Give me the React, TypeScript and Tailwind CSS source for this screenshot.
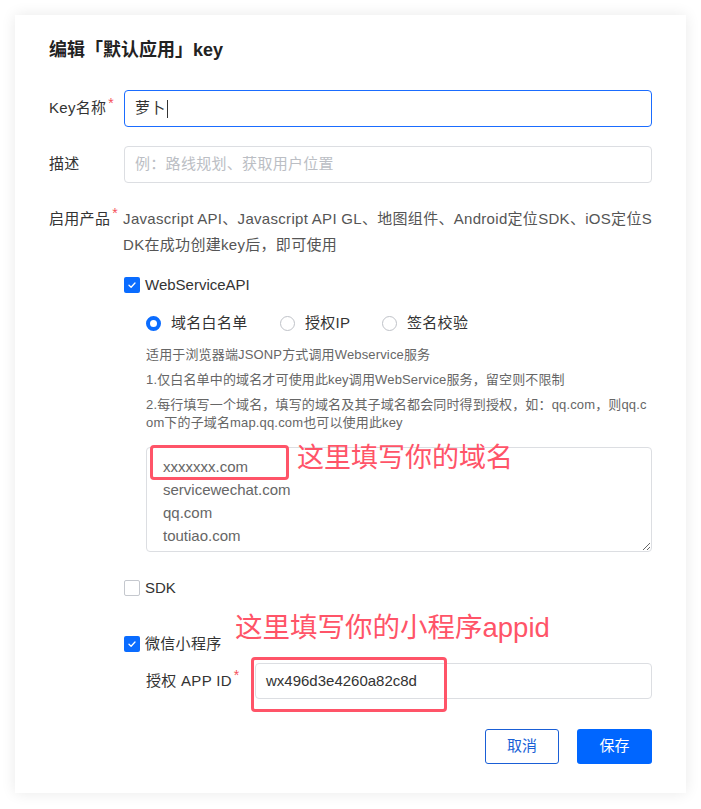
import React from "react";

const FONT = { fontFamily: '"Liberation Sans", "Noto Sans CJK SC", sans-serif' };

function Check({ checked }: { checked: boolean }) {
  if (!checked) {
    return <span className="w-[16px] h-[16px] rounded-[2px] border border-[#c5c8ce] bg-white shrink-0" />;
  }
  return (
    <span className="w-[16px] h-[16px] rounded-[2px] bg-[#0a6cff] flex items-center justify-center shrink-0">
      <svg width="10" height="10" viewBox="0 0 10 10" fill="none">
        <path d="M2 5.2 4.1 7.2 8 3" stroke="white" strokeWidth="1.3" strokeLinecap="round" strokeLinejoin="round" />
      </svg>
    </span>
  );
}

function Radio({ on, label, w }: { on: boolean; label: string; w: string }) {
  return (
    <div className={`flex items-center gap-[10px] ${w}`}>
      {on ? (
        <span className="w-[15px] h-[15px] rounded-full border-[4px] border-[#0a6cff] bg-white shrink-0" />
      ) : (
        <span className="w-[15px] h-[15px] rounded-full border border-[#bfc2c8] bg-white shrink-0" />
      )}
      <span className="text-[15px] tracking-[0.3px] text-[#333]">{label}</span>
    </div>
  );
}

function Star() {
  return <span className="text-[#f5505a] text-[14px] leading-none relative -top-[6px] ml-[2px]">*</span>;
}

export default function App() {
  return (
    <div className="w-[701px] h-[809px] bg-white overflow-hidden pt-[15px] pl-[15px]" style={FONT}>
      <div className="relative w-[671px] bg-white shadow-[0_0_14px_rgba(0,0,0,0.09)] px-[34px] pt-[23px] pb-[29px] flex flex-col">
        <h1 className="text-[18px] leading-[24px] font-bold text-[#222]">编辑「默认应用」key</h1>

        {/* Key名称 */}
        <div className="mt-[28px] flex items-center">
          <div className="w-[75px] text-[15px] tracking-[0.3px] text-[#333] flex items-center">
            Key名称<Star />
          </div>
          <div className="flex-1 h-[37px] rounded-[4px] border border-[#1a6cff] flex items-center px-[10px] text-[15px] tracking-[0.3px] text-[#333]">
            萝卜<span className="w-px h-[18px] bg-[#333] ml-[1px]" />
          </div>
        </div>

        {/* 描述 */}
        <div className="mt-[19px] flex items-center">
          <div className="w-[75px] text-[15px] tracking-[0.3px] text-[#333]">描述</div>
          <div className="flex-1 h-[37px] rounded-[4px] border border-[#dcdee2] flex items-center px-[10px] text-[15px] tracking-[0.3px] text-[#bbbec4]">
            例：路线规划、获取用户位置
          </div>
        </div>

        {/* 启用产品 */}
        <div className="mt-[23px] flex items-start">
          <div className="w-[75px] text-[15px] tracking-[0.3px] leading-[26px] text-[#333] flex items-center">
            启用产品<Star />
          </div>
          <div className="flex-1 text-[15px] tracking-[0.3px] leading-[26px] text-[#555] whitespace-nowrap">
            Javascript API、Javascript API GL、地图组件、Android定位SDK、iOS定位S
            <br />
            DK在成功创建key后，即可使用
          </div>
        </div>

        <div className="pl-[75px] flex flex-col">
          <div className="mt-[17px] h-[20px] flex items-center gap-[5px]">
            <Check checked />
            <span className="text-[15px] text-[#333]">WebServiceAPI</span>
          </div>

          <div className="pl-[22px] flex flex-col">
            <div className="mt-[18px] h-[20px] flex items-center">
              <Radio on label="域名白名单" w="w-[134px]" />
              <Radio on={false} label="授权IP" w="w-[102px]" />
              <Radio on={false} label="签名校验" w="w-[120px]" />
            </div>

            <div className="mt-[13px] text-[13px] tracking-[0.15px] leading-[18px] text-[#666] whitespace-nowrap flex flex-col gap-[7px]">
              <p>适用于浏览器端JSONP方式调用Webservice服务</p>
              <p>1.仅白名单中的域名才可使用此key调用WebService服务，留空则不限制</p>
              <p>
                2.每行填写一个域名，填写的域名及其子域名都会同时得到授权，如：qq.com，则qq.c
                <br />
                om下的子域名map.qq.com也可以使用此key
              </p>
            </div>

            <textarea
              readOnly
              className="mt-[15px] h-[105px] w-full rounded-[4px] border border-[#dcdee2] pl-[16px] pt-[7px] text-[15px] leading-[23px] text-[#666] outline-none resize-y"
              style={FONT}
              defaultValue={"xxxxxxx.com\nservicewechat.com\nqq.com\ntoutiao.com"}
            />
          </div>

          <div className="mt-[26px] h-[20px] flex items-center gap-[5px]">
            <Check checked={false} />
            <span className="text-[15px] text-[#333]">SDK</span>
          </div>

          <div className="mt-[36px] h-[20px] flex items-center gap-[5px]">
            <Check checked />
            <span className="text-[15px] tracking-[0.3px] text-[#333]">微信小程序</span>
          </div>

          <div className="pl-[22px] mt-[9px] flex items-center">
            <div className="w-[109px] text-[15px] tracking-[0.3px] text-[#333] flex items-center">
              授权 APP ID<Star />
            </div>
            <div className="flex-1 h-[36px] rounded-[4px] border border-[#dcdee2] flex items-center px-[10px] text-[15px] text-[#333]">
              wx496d3e4260a82c8d
            </div>
          </div>
        </div>

        {/* buttons */}
        <div className="mt-[30px] flex justify-end gap-[18px]">
          <button className="w-[74px] h-[35px] rounded-[3px] border border-[#1a5fd6] text-[15px] text-[#1a5fd6] bg-white">取消</button>
          <button className="w-[75px] h-[35px] rounded-[3px] bg-[#0066ff] text-[15px] text-white">保存</button>
        </div>

        {/* annotations */}
        <div className="absolute left-[135px] top-[430px] w-[139px] h-[35px] rounded-[4px] border-[3px] border-[#ff5468]" />
        <div className="absolute left-[282px] top-[427px] text-[27px] leading-[32px] text-[#ff5468] whitespace-nowrap">
          这里填写你的域名
        </div>
        <div className="absolute left-[220px] top-[597px] text-[27.5px] leading-[32px] text-[#ff5468] whitespace-nowrap">
          这里填写你的小程序appid
        </div>
        <div className="absolute left-[236px] top-[642px] w-[196px] h-[55px] rounded-[4px] border-[3px] border-[#ff5468]" />
      </div>
    </div>
  );
}
